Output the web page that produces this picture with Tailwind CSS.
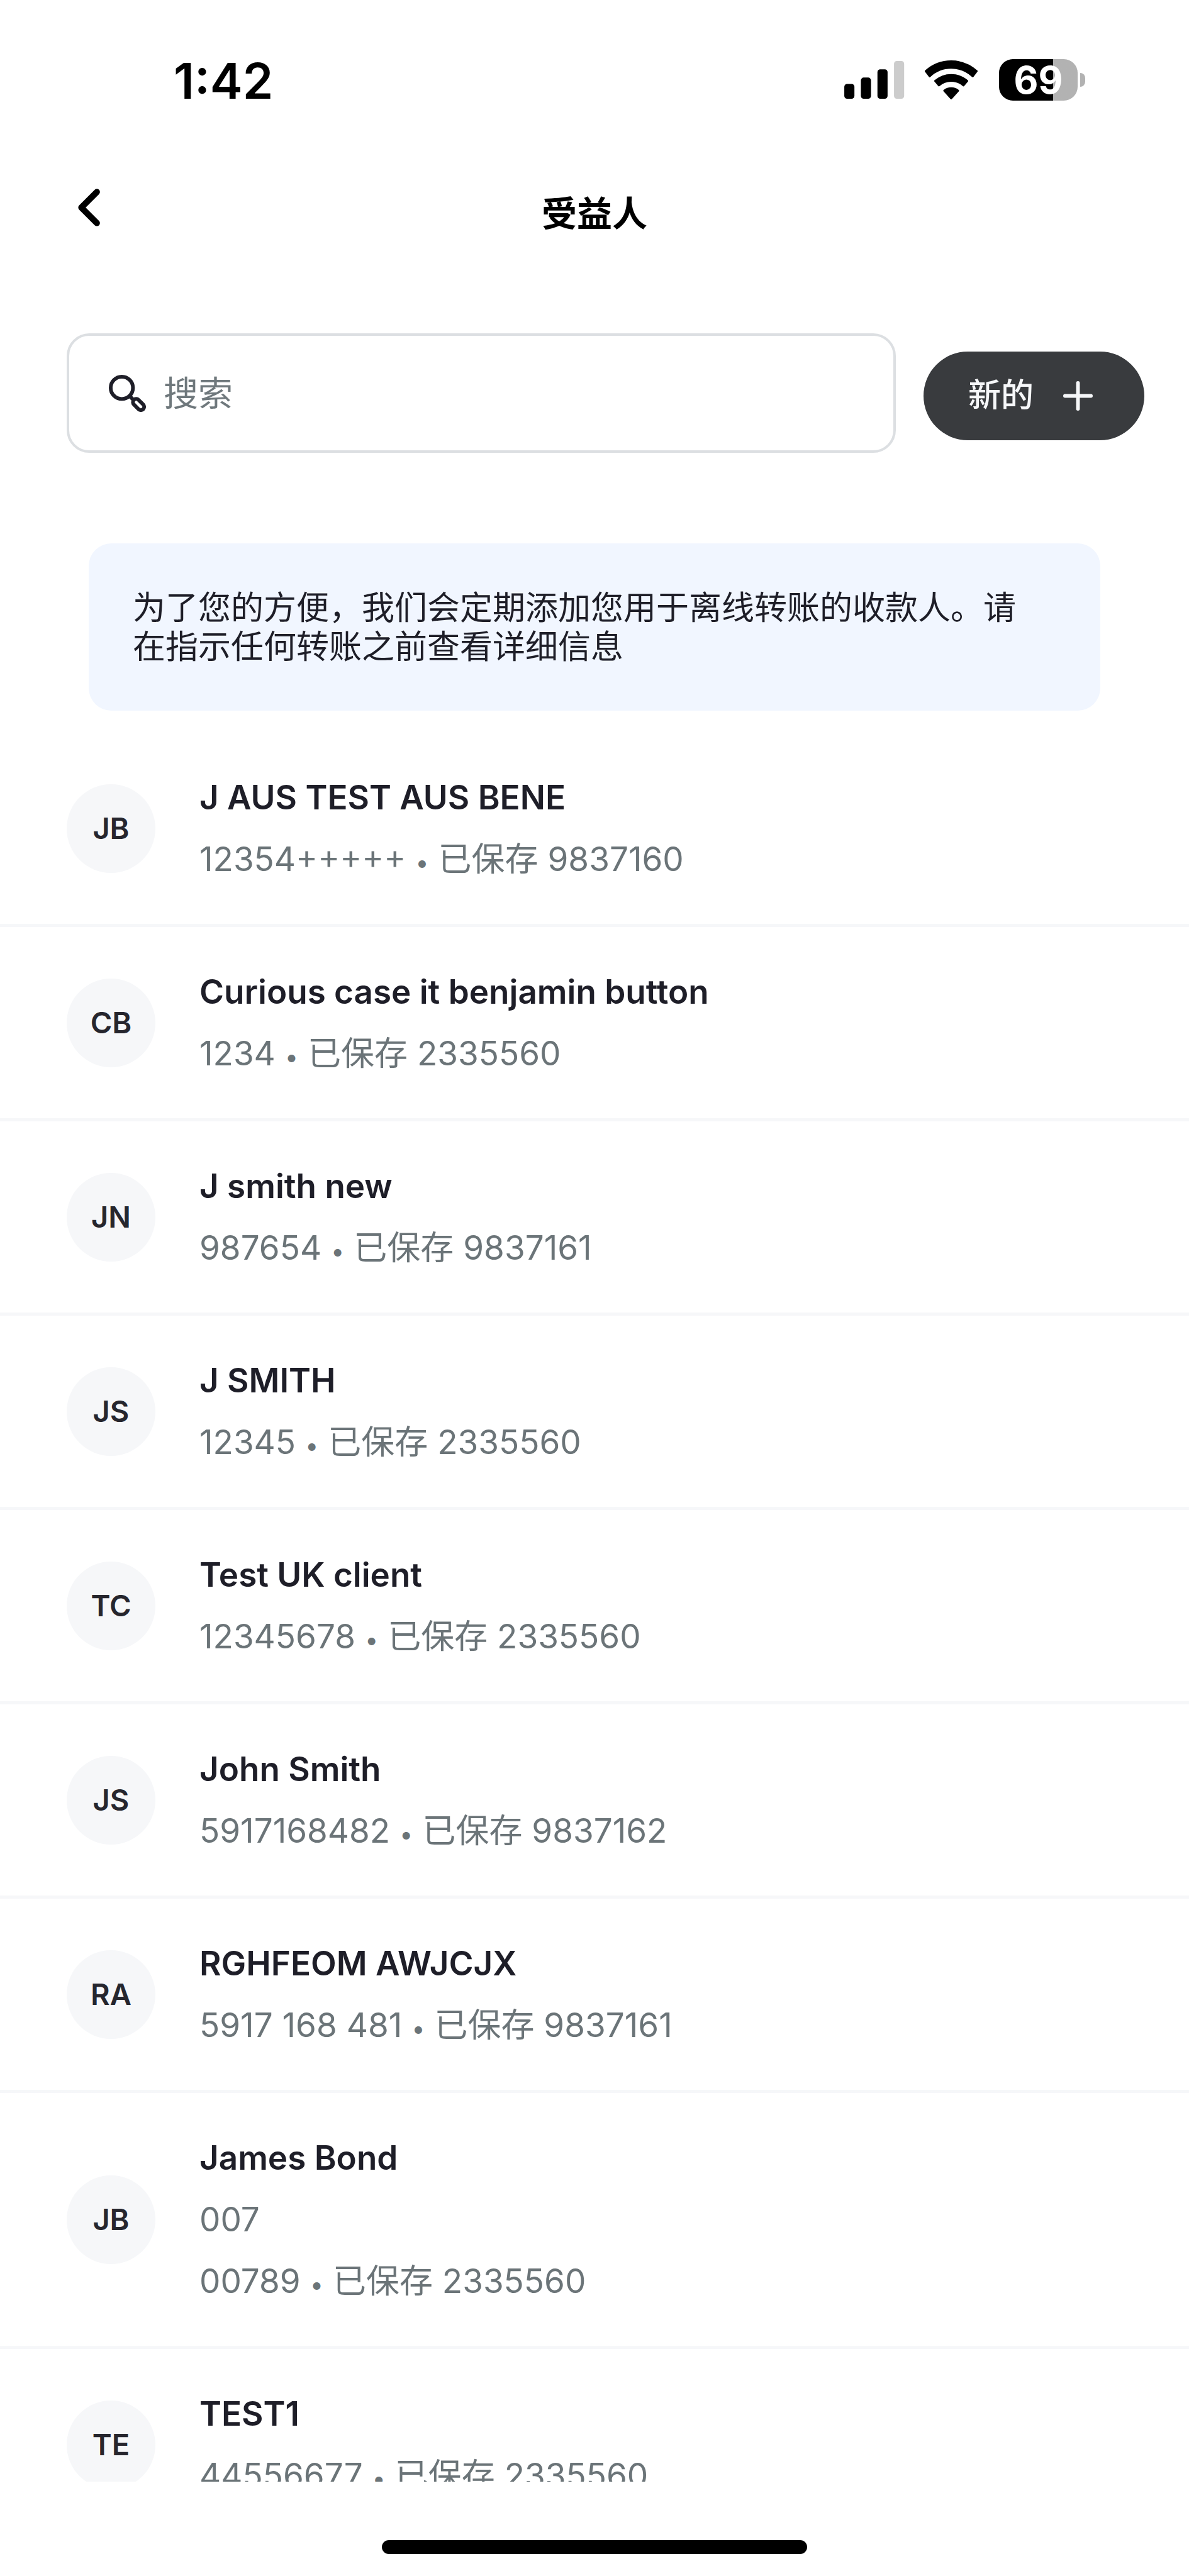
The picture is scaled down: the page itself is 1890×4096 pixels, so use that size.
<!DOCTYPE html>
<html lang="zh-CN">
<head>
    <meta charset="UTF-8">
    <meta name="viewport" content="width=device-width, initial-scale=1.0">
    <title>受益人</title>
    <script src="https://cdn.jsdelivr.net/npm/@tailwindcss/browser@4"></script>
</head>
<body class="h-screen flex flex-col overflow-hidden bg-white text-[#1e1e28] font-['Inter','Noto_Sans_CJK_SC',sans-serif]">
    <!-- Status Bar -->
    <div class="h-[254px] shrink-0 flex items-center justify-between pl-[276px] pr-[165px] text-black">
        <span class="mt-1 text-[78px] leading-none font-semibold">1:42</span>
        <div class="flex items-center">
            <svg class="w-[96px] h-[60px] mr-8" viewBox="0 0 131 82" aria-hidden="true">
                <rect x="0" y="50" width="22" height="32" rx="6"/>
                <rect x="36" y="36" width="22" height="46" rx="6"/>
                <rect x="72" y="18" width="22" height="64" rx="6"/>
                <rect x="108" y="0" width="22" height="82" rx="6" fill="#cccccc"/>
            </svg>
            <svg class="w-[84px] h-[62px] mr-[34px]" viewBox="0 0 114 84" stroke="black" stroke-width="4" stroke-linejoin="round" aria-hidden="true">
                <path d="M2 23.2A82 82 0 0 1 112 23.2L103.5 34.4A68 68 0 0 0 10.5 34.4Z"/>
                <path d="M22.4 44.3A52.7 52.7 0 0 1 91.6 44.3L83.5 54A40 40 0 0 0 30.5 54Z"/>
                <path d="M42 65.3A24 24 0 0 1 72 65.3L57 82Z"/>
            </svg>
            <div class="w-[125px] h-[66px] rounded-[22px] flex items-center justify-center bg-linear-to-r from-black from-69% to-[#b2b2b2] to-69% text-white text-[60px] leading-none font-bold">69</div>
            <div class="w-2 h-[22px] ml-1 rounded-r-full bg-[#b2b2b2]"></div>
        </div>
    </div>

    <!-- Nav -->
    <header class="h-[160px] shrink-0 grid grid-cols-3 items-center px-[124px]">
        <button class="justify-self-start" aria-label="返回">
            <svg class="w-[36px] h-[60px] mb-2" viewBox="0 0 48 80" fill="none" stroke="black" stroke-width="13" stroke-linecap="round" stroke-linejoin="round">
                <path d="M40 7L7 40L40 73"/>
            </svg>
        </button>
        <h1 class="mt-3 justify-self-center text-[56px] leading-[80px] font-bold text-black">受益人</h1>
    </header>

    <!-- Search -->
    <div class="shrink-0 flex items-center gap-[44px] mt-[116px] pl-[106px] pr-[71px]">
        <label class="flex-1 h-[190px] flex items-center gap-[28px] px-[63px] border-4 border-[#dcdfe2] rounded-[36px]">
            <svg class="w-[59px] h-[59px] shrink-0" viewBox="0 0 80 80" fill="none" stroke="#1e1e28" stroke-width="8" aria-hidden="true">
                <circle cx="28" cy="28" r="24"/>
                <path d="M44 45L53 54"/>
                <path d="M54 64A7 7 0 0 1 64 54L74 64A7 7 0 0 1 64 74Z"/>
            </svg>
            <input type="text" placeholder="搜索" aria-label="搜索" class="w-full h-[90px] text-[55px] outline-none placeholder:text-[#6f787c]">
        </label>
        <button class="mt-2 h-[141px] flex items-center gap-[47px] pl-[71px] pr-[82px] rounded-full bg-[#393b3e] text-[#f6f7f9] text-[52px] font-medium">
            新的
            <svg class="w-[47px] h-[47px]" viewBox="0 0 64 64" fill="none" stroke="currentColor" stroke-width="8" stroke-linecap="round" aria-hidden="true">
                <path d="M32 4V60M4 32H60"/>
            </svg>
        </button>
    </div>

    <!-- Notice -->
    <p class="shrink-0 mt-[144px] mx-[141px] px-[70px] pt-[72px] pb-[70px] rounded-[36px] bg-[#f1f6ff] text-[52px] leading-[62px]">为了您的方便，我们会定期添加您用于离线转账的收款人。请<br>在指示任何转账之前查看详细信息</p>

    <!-- Beneficiaries -->
    <ul class="flex-1 min-h-0 overflow-hidden mt-[35px] text-[53px] leading-[98px] text-[#6b7478]">
        <li class="border-b-5 border-[#f6f7f9]">
            <a href="#" class="flex items-center gap-[70px] px-[106px] pt-[54px] pb-[54px]">
                <span class="size-[141px] shrink-0 flex items-center justify-center rounded-full bg-[#f6f7f9] text-[47px] font-semibold text-[#26262e]">JB</span>
                <div>
                    <h2 class="font-semibold text-[#1e1e28]">J AUS TEST AUS BENE</h2>
                    <p>12354+++++ <span class="text-[38px] leading-none">•</span> 已保存 9837160</p>
                </div>
            </a>
        </li>
        <li class="border-b-5 border-[#f6f7f9]">
            <a href="#" class="flex items-center gap-[70px] px-[106px] pt-[54px] pb-[54px]">
                <span class="size-[141px] shrink-0 flex items-center justify-center rounded-full bg-[#f6f7f9] text-[47px] font-semibold text-[#26262e]">CB</span>
                <div>
                    <h2 class="font-semibold text-[#1e1e28]">Curious case it benjamin button</h2>
                    <p>1234 <span class="text-[38px] leading-none">•</span> 已保存 2335560</p>
                </div>
            </a>
        </li>
        <li class="border-b-5 border-[#f6f7f9]">
            <a href="#" class="flex items-center gap-[70px] px-[106px] pt-[54px] pb-[54px]">
                <span class="size-[141px] shrink-0 flex items-center justify-center rounded-full bg-[#f6f7f9] text-[47px] font-semibold text-[#26262e]">JN</span>
                <div>
                    <h2 class="font-semibold text-[#1e1e28]">J smith new</h2>
                    <p>987654 <span class="text-[38px] leading-none">•</span> 已保存 9837161</p>
                </div>
            </a>
        </li>
        <li class="border-b-5 border-[#f6f7f9]">
            <a href="#" class="flex items-center gap-[70px] px-[106px] pt-[54px] pb-[54px]">
                <span class="size-[141px] shrink-0 flex items-center justify-center rounded-full bg-[#f6f7f9] text-[47px] font-semibold text-[#26262e]">JS</span>
                <div>
                    <h2 class="font-semibold text-[#1e1e28]">J SMITH</h2>
                    <p>12345 <span class="text-[38px] leading-none">•</span> 已保存 2335560</p>
                </div>
            </a>
        </li>
        <li class="border-b-5 border-[#f6f7f9]">
            <a href="#" class="flex items-center gap-[70px] px-[106px] pt-[54px] pb-[54px]">
                <span class="size-[141px] shrink-0 flex items-center justify-center rounded-full bg-[#f6f7f9] text-[47px] font-semibold text-[#26262e]">TC</span>
                <div>
                    <h2 class="font-semibold text-[#1e1e28]">Test UK client</h2>
                    <p>12345678 <span class="text-[38px] leading-none">•</span> 已保存 2335560</p>
                </div>
            </a>
        </li>
        <li class="border-b-5 border-[#f6f7f9]">
            <a href="#" class="flex items-center gap-[70px] px-[106px] pt-[54px] pb-[54px]">
                <span class="size-[141px] shrink-0 flex items-center justify-center rounded-full bg-[#f6f7f9] text-[47px] font-semibold text-[#26262e]">JS</span>
                <div>
                    <h2 class="font-semibold text-[#1e1e28]">John Smith</h2>
                    <p>5917168482 <span class="text-[38px] leading-none">•</span> 已保存 9837162</p>
                </div>
            </a>
        </li>
        <li class="border-b-5 border-[#f6f7f9]">
            <a href="#" class="flex items-center gap-[70px] px-[106px] pt-[54px] pb-[54px]">
                <span class="size-[141px] shrink-0 flex items-center justify-center rounded-full bg-[#f6f7f9] text-[47px] font-semibold text-[#26262e]">RA</span>
                <div>
                    <h2 class="font-semibold text-[#1e1e28]">RGHFEOM AWJCJX</h2>
                    <p>5917 168 481 <span class="text-[38px] leading-none">•</span> 已保存 9837161</p>
                </div>
            </a>
        </li>
        <li class="border-b-5 border-[#f6f7f9]">
            <a href="#" class="flex items-center gap-[70px] px-[106px] pt-[54px] pb-[54px]">
                <span class="size-[141px] shrink-0 flex items-center justify-center rounded-full bg-[#f6f7f9] text-[47px] font-semibold text-[#26262e]">JB</span>
                <div>
                    <h2 class="font-semibold text-[#1e1e28]">James Bond</h2>
                    <p>007</p>
                    <p>00789 <span class="text-[38px] leading-none">•</span> 已保存 2335560</p>
                </div>
            </a>
        </li>
        <li class="border-b-5 border-[#f6f7f9]">
            <a href="#" class="flex items-center gap-[70px] px-[106px] pt-[54px] pb-[54px]">
                <span class="size-[141px] shrink-0 flex items-center justify-center rounded-full bg-[#f6f7f9] text-[47px] font-semibold text-[#26262e]">TE</span>
                <div>
                    <h2 class="font-semibold text-[#1e1e28]">TEST1</h2>
                    <p>44556677 <span class="text-[38px] leading-none">•</span> 已保存 2335560</p>
                </div>
            </a>
        </li>
    </ul>

    <!-- Home Indicator -->
    <div class="h-[150px] shrink-0 flex items-end justify-center pb-[35px]">
        <div class="w-[676px] h-[22px] rounded-full bg-black"></div>
    </div>
</body>
</html>
